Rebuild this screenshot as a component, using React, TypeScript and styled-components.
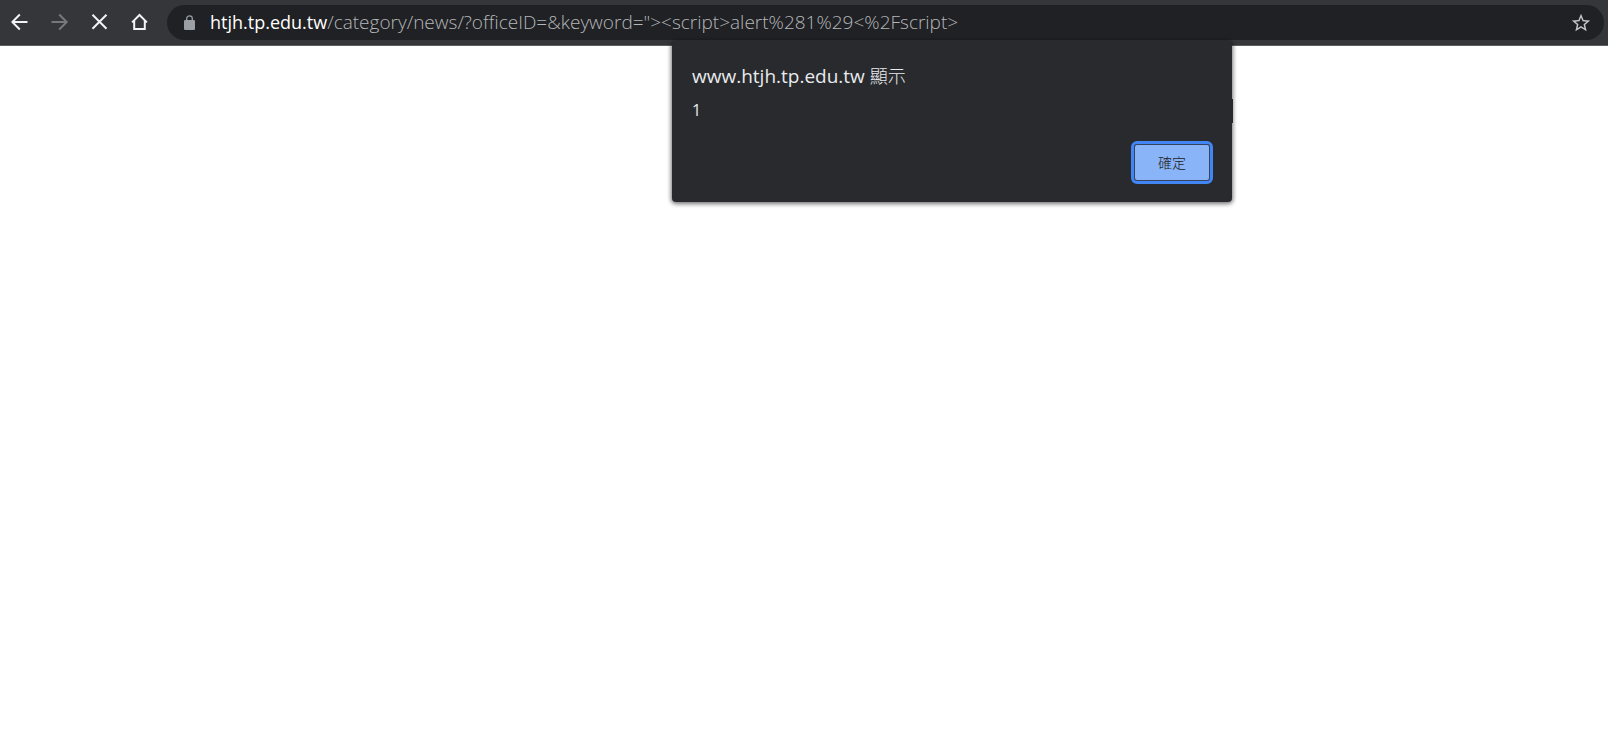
import React from 'react';
import styled, { createGlobalStyle } from 'styled-components';

const GlobalStyle = createGlobalStyle`
  * { box-sizing: border-box; }
  body {
    margin: 0;
    background: #ffffff;
    font-family: "Open Sans", "Noto Sans CJK TC", sans-serif;
  }
`;

const Browser = styled.div`
  position: relative;
  min-height: 100vh;
`;

const Toolbar = styled.header`
  display: flex;
  align-items: flex-start;
  padding: 5px 4px 5px 0;
  background: #35363a;
  border-bottom: 1px solid #5c5d60;
`;

const NavButtons = styled.nav`
  display: flex;
  flex: none;
  width: 167px;
`;

const IconButton = styled.button<{ $color?: string }>`
  display: grid;
  place-items: center;
  width: 40px;
  height: 34px;
  padding: 0;
  border: 0;
  background: none;
  color: ${({ $color }) => $color ?? '#f1f3f4'};
  svg { display: block; }
`;

const AddressBar = styled.form`
  display: flex;
  flex: 1;
  align-items: center;
  min-width: 0;
  height: 35px;
  padding: 0 3px 0 17px;
  border-radius: 18px;
  background: #202124;
  font-size: 19px;
  line-height: 24px;
`;

const Host = styled.label`
  margin-left: 15px;
  padding-bottom: 2px;
  color: #ffffff;
  font-size: 18px;
`;

const PathInput = styled.input`
  flex: 1;
  min-width: 0;
  height: 33px;
  padding: 0 0 2px;
  border: 0;
  outline: 0;
  background: none;
  color: #b4b6b9;
  font: inherit;
  font-weight: 300;
`;

const Dialog = styled.section`
  position: absolute;
  top: 41px;
  left: 672px;
  display: flex;
  flex-direction: column;
  width: 560px;
  padding: 20px 18px 17px 20px;
  border-radius: 4px;
  background: #292a2d;
  box-shadow: 0 1px 4px 1px rgba(0, 0, 0, 0.55);
  color: #e8eaed;

  /* Scroll thumb peeking out at the dialog's right edge */
  &::after {
    content: "";
    position: absolute;
    top: 58px;
    right: -1px;
    width: 1px;
    height: 24px;
    background: #292a2d;
  }
`;

const DialogTitle = styled.h1`
  margin: 0;
  font-size: 19px;
  font-weight: 400;
  line-height: 30px;
`;

const Light = styled.span`
  font-size: 18px;
  font-weight: 300;
`;

const Message = styled.p`
  margin: 7px 0 0;
  font-size: 16px;
  line-height: 24px;
`;

const ConfirmButton = styled.button`
  align-self: flex-end;
  width: 76px;
  height: 37px;
  margin: 22px 4px 4px;
  padding: 0;
  border: 1px solid #35435f;
  border-radius: 3px;
  outline: 3px solid #4285f4;
  outline-offset: 0;
  background: #8ab4f8;
  color: #202124;
  font-family: inherit;
  font-size: 14px;
  font-weight: 300;
  line-height: 20px;
`;

const stroke = { fill: 'none', stroke: 'currentColor', strokeWidth: 2 };

const BackIcon = () => (
  <svg width="18" height="18" viewBox="0 0 18 18" {...stroke}>
    <path d="M16.5 9H1.5M8.8 1.5 1.3 9l7.5 7.5" />
  </svg>
);

const ForwardIcon = () => (
  <svg width="18" height="18" viewBox="0 0 18 18" {...stroke}>
    <path d="M.5 9h15M8.2 1.5 15.7 9l-7.5 7.5" />
  </svg>
);

const StopIcon = () => (
  <svg width="18" height="18" viewBox="0 0 18 18" {...stroke}>
    <path d="m1.5 1.8 14 14M15.5 1.8l-14 14" />
  </svg>
);

const HomeIcon = () => (
  <svg width="18" height="18" viewBox="0 0 18 18" {...stroke}>
    <path d="M1.1 9.4 8.5 2l7.4 7.4M3.2 7.7V16h10.6V7.7" />
  </svg>
);

const LockIcon = () => (
  <svg width="11" height="15" viewBox="0 0 11 15">
    <rect y="5" width="11" height="10" rx="1.2" fill="#9aa0a6" />
    <path d="M2.7 6V3.6a2.8 2.8 0 0 1 5.6 0V6" fill="none" stroke="#9aa0a6" strokeWidth="1.3" />
  </svg>
);

const StarIcon = () => (
  <svg width="22" height="22" viewBox="0 0 24 24" fill="currentColor">
    <path d="m22 9.24-7.19-.62L12 2 9.19 8.63 2 9.24l5.46 4.73L5.82 21 12 17.27 18.18 21l-1.63-7.03L22 9.24zM12 15.4l-3.76 2.27 1-4.28-3.32-2.88 4.38-.38L12 6.1l1.71 4.04 4.38.38-3.32 2.88 1 4.28L12 15.4z" />
  </svg>
);

export default function App() {
  return (
    <Browser>
      <GlobalStyle />
      <Toolbar>
        <NavButtons aria-label="瀏覽">
          <IconButton type="button" aria-label="返回"><BackIcon /></IconButton>
          <IconButton type="button" aria-label="往前" $color="#77787b"><ForwardIcon /></IconButton>
          <IconButton type="button" aria-label="停止"><StopIcon /></IconButton>
          <IconButton type="button" aria-label="首頁"><HomeIcon /></IconButton>
        </NavButtons>
        <AddressBar onSubmit={(event) => event.preventDefault()}>
          <LockIcon />
          <Host htmlFor="address">htjh.tp.edu.tw</Host>
          <PathInput
            id="address"
            type="text"
            spellCheck={false}
            defaultValue={'/category/news/?officeID=&keyword="><script>alert%281%29<%2Fscript>'}
          />
          <IconButton type="button" aria-label="加入書籤" $color="#c4c5c8"><StarIcon /></IconButton>
        </AddressBar>
      </Toolbar>
      <Dialog role="alertdialog" aria-labelledby="dialog-title" aria-describedby="dialog-message">
        <DialogTitle id="dialog-title">www.htjh.tp.edu.tw <Light>顯示</Light></DialogTitle>
        <Message id="dialog-message">1</Message>
        <ConfirmButton type="button">確定</ConfirmButton>
      </Dialog>
    </Browser>
  );
}
